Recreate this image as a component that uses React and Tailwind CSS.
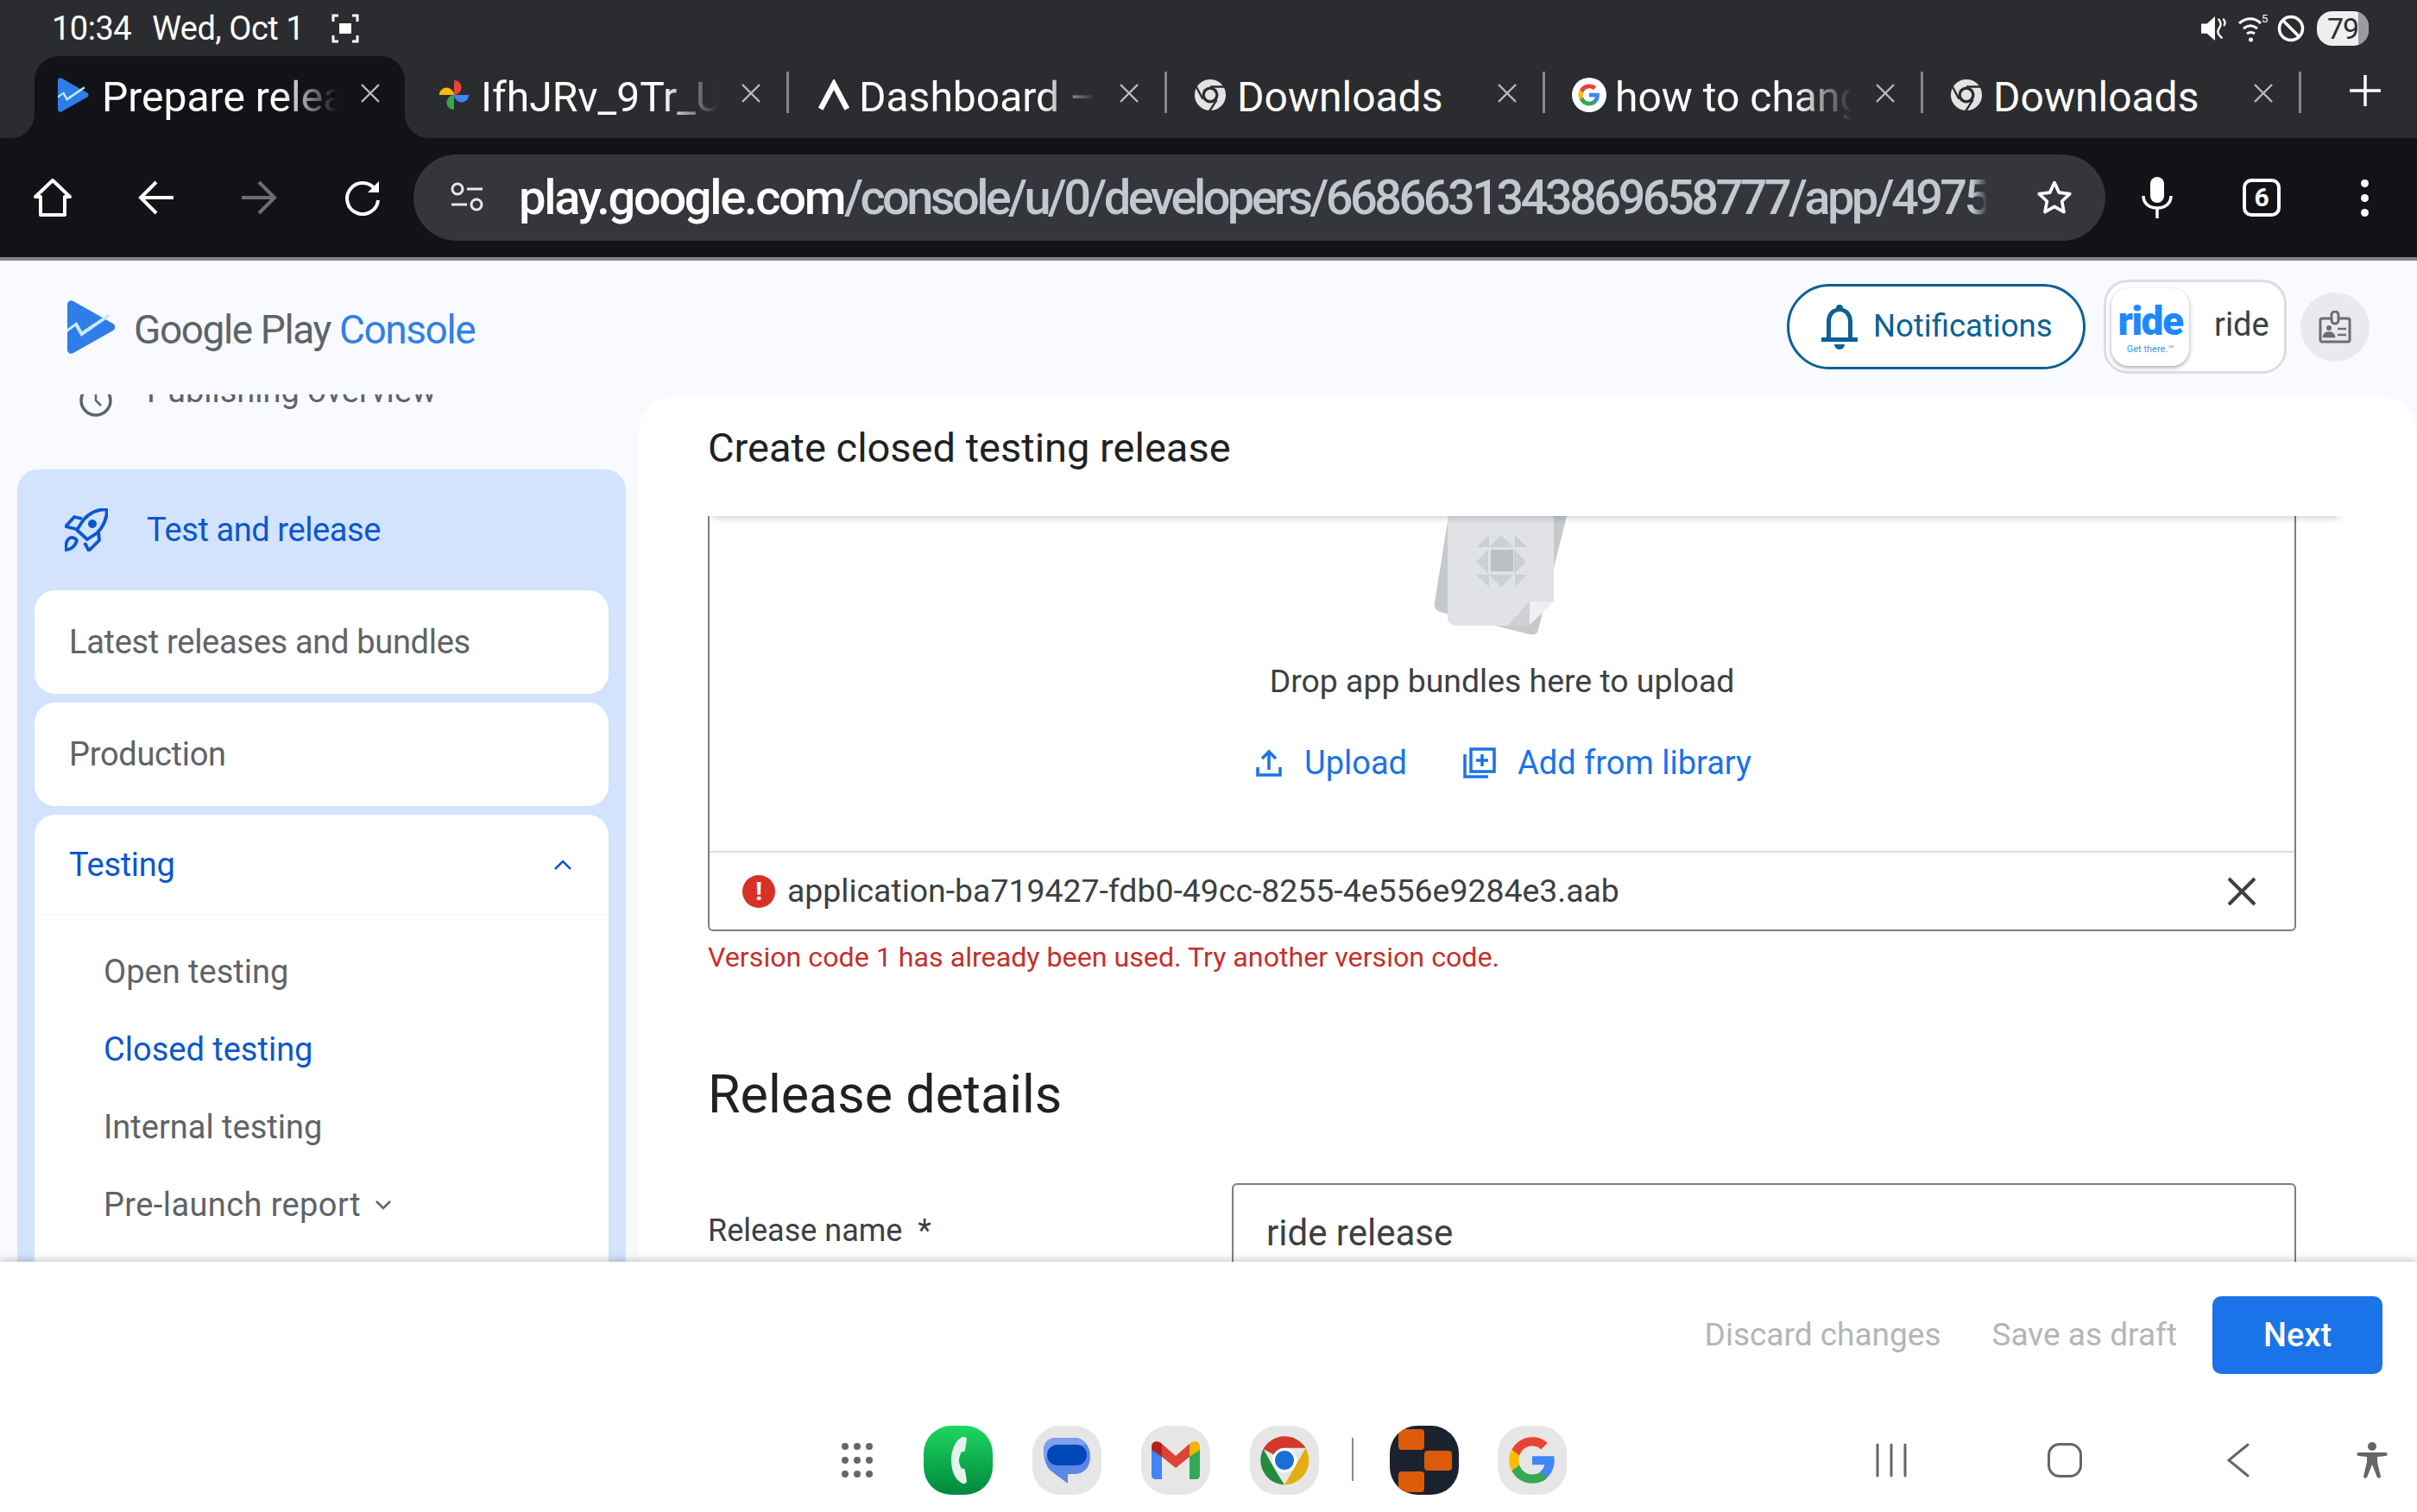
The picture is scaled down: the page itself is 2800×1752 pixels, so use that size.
import React from 'react';

const PlayLogo = ({ className }) => (
  <svg className={className} viewBox="0 0 56 62" fill="none">
    <path d="M0 5C0 1 4-1 7 1l46 26c3 2 3 6 0 8L7 61c-3 2-7 0-7-4z" fill="#2f7de9" />
    <path d="M0 33l11-8 6 11 30-20 2 3-33 23-7-12-9 7z" fill="#c4ecff" />
  </svg>
);

const ChromeMono = ({ className }) => (
  <svg className={className} viewBox="0 0 40 40">
    <circle cx="20" cy="20" r="19" fill="#e3e3e3" />
    <circle cx="20" cy="20" r="10" fill="#2b2c30" />
    <circle cx="20" cy="20" r="6.5" fill="#e3e3e3" />
    <path d="M20 10h18M11 25L3 10M28 26l-9 14" stroke="#2b2c30" strokeWidth="2.5" />
  </svg>
);

const GoogleG = ({ className }) => (
  <svg className={className} viewBox="0 0 48 48">
    <path fill="#4285F4" d="M46 24.500c0-1.600-.1-3.100-.4-4.500H24v8.600h12.300c-.5 2.800-2.100 5.200-4.500 6.800v5.600h7.300C43.400 37 46 31.300 46 24.500z" />
    <path fill="#34A853" d="M24 47c6.100 0 11.300-2 15.100-5.500l-7.300-5.600c-2 1.400-4.700 2.200-7.800 2.200-5.900 0-10.900-4-12.700-9.400H3.700v5.800C7.500 42 15.200 47 24 47z" />
    <path fill="#FBBC05" d="M11.300 28.700c-.5-1.400-.7-3-.7-4.700s.3-3.200.7-4.700v-5.800H3.700C2.100 16.500 1 20.100 1 24s1.100 7.500 2.700 10.500z" />
    <path fill="#EA4335" d="M24 9.900c3.400 0 6.400 1.200 8.700 3.400l6.500-6.500C35.300 3.200 30.100 1 24 1 15.200 1 7.500 6 3.700 13.500l7.600 5.800C13.100 13.900 18.100 9.900 24 9.900z" />
  </svg>
);

const Tab = ({ icon, label, fade }) => (
  <div className="flex h-[86px] w-[435px] shrink-0 items-center pl-[31px]">
    <div className="mt-[4px] flex w-[50px] shrink-0 items-center">{icon}</div>
    <div className={`mt-[10px] w-[280px] shrink-0 overflow-hidden whitespace-nowrap text-[48px] leading-[72px] text-white ${fade ? '[mask-image:linear-gradient(to_right,#000_75%,transparent_98%)]' : ''}`}>
      {label}
    </div>
    <svg className="ml-[21px] h-[24px] w-[24px] shrink-0" viewBox="0 0 24 24" stroke="#b9bbc0" strokeWidth="2.4" fill="none">
      <path d="M2 2l20 20M22 2L2 22" />
    </svg>
  </div>
);

const TabSep = () => <div className="mt-[18px] h-[48px] w-[3px] shrink-0 bg-[#85878c]" />;

const StatusBar = () => (
  <div className="flex h-[65px] items-center bg-[#2b2c30] pl-[60px] pr-[56px] text-white">
    <span className="text-[38px] leading-none tracking-[-0.5px]">10:34</span>
    <span className="ml-[24px] text-[38px] leading-none tracking-[-0.5px]">Wed, Oct 1</span>
    <svg className="ml-[31px] h-[34px] w-[34px]" viewBox="0 0 34 34" fill="none" stroke="#fff" strokeWidth="3">
      <path d="M9 2H3v7M25 2h6v7M9 32H3v-7M25 32h6v-7" />
      <rect x="10" y="11" width="14" height="12" fill="#fff" stroke="none" />
    </svg>
    <div className="ml-auto flex items-center">
      <svg className="h-[36px] w-[30px]" viewBox="0 0 32 36" fill="#fff">
        <path d="M0 12h7l10-9v30l-10-9H0z" />
        <path d="M21 6c4 4 4 8 1 12s-1 8 4 12M27 6c3 3 3 6 1 9" stroke="#fff" strokeWidth="2.500" fill="none" />
      </svg>
      <svg className="ml-[12px] h-[36px] w-[36px]" viewBox="0 0 36 36" fill="none" stroke="#fff" strokeWidth="3">
        <path d="M2 12c8-7 18-7 25 0M7 18c5-4 11-4 16 0M11 24c3-2 6-2 9 0" />
        <circle cx="15.500" cy="31" r="2.500" fill="#fff" stroke="none" />
        <text x="28" y="11" fontSize="13" fill="#fff" stroke="none">5</text>
      </svg>
      <svg className="ml-[10px] h-[36px] w-[32px]" viewBox="0 0 32 32" fill="none" stroke="#fff" strokeWidth="3.500">
        <circle cx="16" cy="16" r="13.500" />
        <path d="M7 7l18 18" />
      </svg>
      <div className="relative ml-[14px] flex h-[40px] w-[60px] items-center justify-center overflow-hidden rounded-[18px] bg-[#efefef] text-[34px] leading-none tracking-[-1px] text-[#2b2c30]">
        79
        <div className="absolute bottom-0 right-0 top-0 w-[12px] bg-[#9a9b9e]" />
      </div>
    </div>
  </div>
);

const TabStrip = () => (
  <div className="flex h-[95px] bg-[#2b2c30] pl-[40px]">
    <div className="relative mr-[7px] h-[95px] w-[429px] shrink-0 rounded-t-[28px] bg-[#121317]">
      <div className="absolute bottom-0 left-[-28px] h-[28px] w-[28px] bg-[radial-gradient(circle_at_0_0,#2b2c30_28px,#121317_28px)]" />
      <div className="absolute bottom-0 right-[-28px] h-[28px] w-[28px] bg-[radial-gradient(circle_at_100%_0,#2b2c30_28px,#121317_28px)]" />
      <div className="flex h-[86px] items-center pl-[27px]">
        <PlayLogo className="mr-[15px] mt-[4px] h-[40px] w-[36px] shrink-0" />
        <div className="mt-[10px] w-[278px] shrink-0 overflow-hidden whitespace-nowrap text-[48px] leading-[72px] text-white [mask-image:linear-gradient(to_right,#000_75%,transparent_98%)]">
          Prepare release
        </div>
        <svg className="ml-[21px] h-[24px] w-[24px] shrink-0" viewBox="0 0 24 24" stroke="#b9bbc0" strokeWidth="2.400" fill="none">
          <path d="M2 2l20 20M22 2L2 22" />
        </svg>
      </div>
    </div>
    <Tab
      fade
      label="IfhJRv_9Tr_Uc"
      icon={
        <svg className="h-[40px] w-[38px]" viewBox="0 0 40 40">
          <path d="M20 20V2c6 0 9 5 9 9s-4 9-9 9z" fill="#ea4335" />
          <path d="M20 20h18c0 6-5 9-9 9s-9-4-9-9z" fill="#4285f4" />
          <path d="M20 20v18c-6 0-9-5-9-9s4-9 9-9z" fill="#34a853" />
          <path d="M20 20H2c0-6 5-9 9-9s9 4 9 9z" fill="#fbbc05" />
        </svg>
      }
    />
    <TabSep />
    <Tab
      fade
      label="Dashboard – Ride"
      icon={
        <svg className="h-[36px] w-[42px]" viewBox="0 0 42 40" fill="none" stroke="#fff" strokeWidth="7">
          <path d="M4 38L21 6l17 32" />
        </svg>
      }
    />
    <TabSep />
    <Tab label="Downloads" icon={<ChromeMono className="h-[38px] w-[38px]" />} />
    <TabSep />
    <Tab fade label="how to change" icon={<div className="flex h-[40px] w-[40px] items-center justify-center rounded-full bg-white"><GoogleG className="h-[26px] w-[26px]" /></div>} />
    <TabSep />
    <Tab label="Downloads" icon={<ChromeMono className="h-[38px] w-[38px]" />} />
    <TabSep />
    <svg className="ml-[56px] mt-[22px] h-[36px] w-[36px] shrink-0" viewBox="0 0 36 36" stroke="#fff" strokeWidth="3.500">
      <path d="M18 0v36M0 18h36" />
    </svg>
  </div>
);

const Toolbar = () => (
  <div className="flex h-[138px] items-center bg-[#121317] pl-[38px]">
    <svg className="h-[46px] w-[46px] shrink-0" viewBox="0 0 46 46" fill="none" stroke="#fff" strokeWidth="4" strokeLinejoin="round">
      <path d="M23 3L3 22h6v21h28V22h6z" />
    </svg>
    <svg className="ml-[76px] h-[40px] w-[42px] shrink-0" viewBox="0 0 42 40" fill="none" stroke="#fff" strokeWidth="4">
      <path d="M21 2L3 20l18 18M3 20h38" />
    </svg>
    <svg className="ml-[77px] h-[40px] w-[42px] shrink-0" viewBox="0 0 42 40" fill="none" stroke="#6d6e72" strokeWidth="4">
      <path d="M21 2l18 18-18 18M39 20H1" />
    </svg>
    <svg className="ml-[78px] h-[42px] w-[42px] shrink-0" viewBox="0 0 42 42" fill="none" stroke="#fff" strokeWidth="4">
      <path d="M36 12A18 18 0 1 0 39 24" />
      <path d="M40 2v13H27z" fill="#fff" stroke="none" />
    </svg>
    <div className="ml-[38px] flex h-[100px] w-[1960px] shrink-0 items-center rounded-full bg-[#35363b] pl-[42px]">
      <svg className="h-[36px] w-[40px] shrink-0" viewBox="0 0 40 36" fill="none" stroke="#e6e7ea" strokeWidth="3">
        <circle cx="9" cy="8" r="6" />
        <path d="M20 8h18M2 26h18" />
        <circle cx="31" cy="26" r="6" />
      </svg>
      <div className="ml-[40px] w-[1701px] shrink-0 overflow-hidden whitespace-nowrap text-[56px] font-medium leading-[80px] tracking-[-3.600px] text-[#c4c7d0] [mask-image:linear-gradient(to_right,#000_99%,transparent)]">
        <span className="tracking-[-2.300px] text-white">play.google.com</span>/console/u/0/developers/6686631343869658777/app/49752
      </div>
      <svg className="ml-[56px] h-[44px] w-[44px] shrink-0" viewBox="0 0 24 24" fill="none" stroke="#fff" strokeWidth="2" strokeLinejoin="round">
        <path d="M12 2.500l2.900 6.300 6.800.8-5 4.700 1.300 6.800-6-3.400-6 3.400 1.300-6.800-5-4.700 6.800-.8z" />
      </svg>
    </div>
    <svg className="ml-[42px] h-[48px] w-[36px] shrink-0" viewBox="0 0 36 48" fill="none">
      <rect x="10" y="0" width="16" height="30" rx="8" fill="#fff" />
      <path d="M2 22c0 9 7 14 16 14s16-5 16-14M18 36v12" stroke="#fff" strokeWidth="3.500" />
    </svg>
    <div className="ml-[81px] flex h-[44px] w-[44px] shrink-0 items-center justify-center rounded-[10px] border-[4px] border-white text-[30px] font-bold leading-none text-white">6</div>
    <div className="ml-[93px] flex shrink-0 flex-col gap-[8px]">
      <div className="h-[9px] w-[9px] rounded-full bg-white" />
      <div className="h-[9px] w-[9px] rounded-full bg-white" />
      <div className="h-[9px] w-[9px] rounded-full bg-white" />
    </div>
  </div>
);

const ConsoleHeader = () => (
  <div className="flex h-[155px] shrink-0 items-center pb-[2px] pl-[78px]">
    <PlayLogo className="h-[62px] w-[56px] shrink-0" />
    <div className="ml-[21px] mt-[6px] whitespace-nowrap text-[46px] leading-none tracking-[-1.4px] text-[#5f6368]">
      Google Play <span className="text-[#3180e6]">Console</span>
    </div>
    <div className="ml-auto flex items-center">
      <div className="flex h-[99px] w-[346px] items-center rounded-full border-[3px] border-[#0b6096] bg-white pl-[37px] text-[36.500px] text-[#0b6096]">
        <svg className="h-[52px] w-[42px] shrink-0" viewBox="0 0 42 52" fill="#0b6096">
          <path d="M21 0a4 4 0 0 1 4 4c8 2 11 9 11 16v18h6v5H0v-5h6V20c0-7 3-14 11-16a4 4 0 0 1 4-4zM11 38h20V20c0-7-4-12-10-12s-10 5-10 12zM15 46h12a6 6 0 0 1-12 0z" />
        </svg>
        <span className="ml-[18px] whitespace-nowrap">Notifications</span>
      </div>
      <div className="ml-[21px] flex h-[109px] w-[212px] items-center rounded-[28px] border-[3px] border-[#dcdde0] bg-white pl-[6px]">
        <div className="flex h-[90px] w-[90px] shrink-0 flex-col items-center justify-center rounded-[20px] bg-white shadow-[0_2px_5px_rgba(0,0,0,0.35)]">
          <div className="text-[46px] font-black leading-[50px] tracking-[-1.500px] text-[#1e88ff]">ride</div>
          <div className="mt-[2px] text-[11px] leading-[12px] text-[#3a96f5]">Get there.™</div>
        </div>
        <span className="mb-[6px] ml-[29px] text-[38px] leading-none text-[#3c4043]">ride</span>
      </div>
      <div className="ml-[16px] mr-[55px] flex h-[80px] w-[80px] items-center justify-center rounded-full bg-[#e8eaed]">
        <svg className="h-[38px] w-[38px]" viewBox="0 0 38 38" fill="none" stroke="#6b6d70" strokeWidth="3">
          <rect x="2" y="9" width="34" height="27" rx="2" />
          <rect x="15" y="1" width="8" height="14" rx="4" fill="#e8eaed" />
          <circle cx="12" cy="20" r="3" fill="#6b6d70" stroke="none" />
          <path d="M6 30c1-6 11-6 12 0zM22 21h10M22 28h10" fill="#6b6d70" strokeWidth="2.500" />
        </svg>
      </div>
    </div>
  </div>
);

const NavCard = ({ children }) => (
  <div className="flex h-[120px] items-center rounded-[24px] bg-white pl-[40px] text-[38px] tracking-[-0.3px] text-[#5f6368]">{children}</div>
);

const SubItem = ({ children, active }) => (
  <div className={`flex h-[90px] items-center pl-[80px] text-[38px] ${active ? 'text-[#0b57d0]' : 'text-[#5f6368]'}`}>{children}</div>
);

const Sidebar = () => (
  <div className="w-[740px] shrink-0 overflow-hidden pl-[20px]">
    <div className="mt-[-49px] flex h-[90px] items-center pl-[72px] text-[#5f6368]">
      <svg className="mt-[22px] h-[38px] w-[38px] shrink-0" viewBox="0 0 38 38" fill="none" stroke="#5f6368" strokeWidth="3.500">
        <circle cx="19" cy="19" r="17" />
        <path d="M19 9v10l6 6" strokeWidth="2.500" />
      </svg>
      <span className="ml-[40px] whitespace-nowrap text-[38px]">Publishing overview</span>
    </div>
    <div className="mt-[46px] w-[705px] rounded-[24px] bg-[#d3e3fd] px-[20px] pb-[20px]">
      <div className="flex h-[140px] items-center pl-[35px] text-[38px] tracking-[-0.4px] text-[#0b57d0]">
        <svg className="h-[50px] w-[50px] shrink-0" viewBox="15 19 50 50" fill="none" stroke="#0b57d0" strokeWidth="3.800" strokeLinejoin="round">
          <path d="M64 20C52 20 43 25 37 32L29 44l12 11 11-7C60 40 64 31 64 20z" />
          <circle cx="47" cy="37" r="5" fill="#0b57d0" stroke="none" />
          <path d="M35 31l-9-2-10 11 12 3M54 46l1 10-12 12-5-9" />
          <path d="M16 67c0-6 1-11 4-13s7-1 9 2c-1 4-3 7-6 9s-5 2-7 2z" />
        </svg>
        <span className="ml-[45px] whitespace-nowrap">Test and release</span>
      </div>
      <div className="flex flex-col gap-[10px]">
        <NavCard>Latest releases and bundles</NavCard>
        <NavCard>Production</NavCard>
        <div className="h-[700px] rounded-[24px] bg-white">
          <div className="flex h-[116px] items-center justify-between border-b border-[#f1f3f4] pl-[40px] pr-[42px] text-[38px] tracking-[-0.3px] text-[#0b57d0]">
            <span className="mt-[2px]">Testing</span>
            <svg className="h-[14px] w-[22px]" viewBox="0 0 22 14" fill="none" stroke="#0b57d0" strokeWidth="2.500">
              <path d="M2 12l9-9 9 9" />
            </svg>
          </div>
          <div className="pt-[21px]">
            <SubItem>Open testing</SubItem>
            <SubItem active>Closed testing</SubItem>
            <SubItem>Internal testing</SubItem>
            <SubItem>
              <span className="tracking-[0.4px]">Pre-launch report</span>
              <svg className="ml-[16px] h-[12px] w-[20px]" viewBox="0 0 20 12" fill="none" stroke="#5f6368" strokeWidth="2.500">
                <path d="M2 2l8 8 8-8" />
              </svg>
            </SubItem>
          </div>
        </div>
      </div>
    </div>
  </div>
);

const BundleArt = () => (
  <svg className="h-[139px] w-[180px] shrink-0" viewBox="0 0 180 139">
    <path d="M28 0L12 100c-1 5 1 9 6 11L122 137c6 1 9-1 10-5L165 0z" fill="#c6c9cc" />
    <path d="M27 0H150V99L117 127H37c-6 0-10-4-10-10z" fill="#e0e2e5" />
    <path d="M122 99V127H96z" fill="#cfd1d4" />
    <path d="M122 99H150L122 126z" fill="#eeeff1" />
    <rect x="77" y="39" width="26" height="25" fill="#bdc0c3" />
    <path d="M89 22l14 14H75zM89 82L75 68h28zM60 53l14-14v28zM118 53l-14-14v28zM75 22v14H60zM105 22v14h14zM60 68h15v14zM119 68h-14v14z" fill="#cdd0d3" />
  </svg>
);

const MainCard = () => (
  <div className="mt-[3px] flex min-w-0 flex-1 flex-col overflow-hidden rounded-t-[40px] bg-white">
    <div className="relative z-10 ml-[80px] mr-[85px] flex h-[138px] shrink-0 items-center bg-white pb-[19px] text-[47px] text-[#202124] shadow-[0_8px_8px_-6px_rgba(0,0,0,0.2)]">
      Create closed testing release
    </div>
    <div className="ml-[80px] mr-[140px]">
      <div className="flex h-[481px] flex-col rounded-b-[6px] border-x-[2px] border-b-[2px] border-[#7c7f83]">
        <div className="flex h-[388px] flex-col items-center">
          <BundleArt />
          <div className="mt-[27px] text-[37.400px] leading-[50px] text-[#3c4043]">Drop app bundles here to upload</div>
          <div className="ml-[4px] mt-[45px] flex items-center text-[38px] leading-[50px] text-[#1a73e8]">
            <svg className="h-[32px] w-[30px]" viewBox="0 0 30 32" fill="none" stroke="#1a73e8" strokeWidth="3.500">
              <path d="M15 24V3M7 11l8-8 8 8M2 21v9h26v-9" />
            </svg>
            <span className="ml-[26px]">Upload</span>
            <svg className="ml-[65px] h-[36px] w-[38px]" viewBox="0 0 38 36" fill="none" stroke="#1a73e8" strokeWidth="3.500">
              <rect x="9" y="2" width="27" height="26" />
              <path d="M2 8v26h27M22 8v14M15 15h14" />
            </svg>
            <span className="ml-[25px] whitespace-nowrap">Add from library</span>
          </div>
        </div>
        <div className="flex flex-1 items-center border-t-[2px] border-[#dadce0] pl-[38px] pr-[44px]">
          <div className="flex h-[38px] w-[38px] shrink-0 items-center justify-center rounded-full bg-[#d93025] text-[30px] font-bold leading-none text-white">!</div>
          <span className="ml-[14px] whitespace-nowrap text-[37.400px] text-[#3c4043]">application-ba719427-fdb0-49cc-8255-4e556e9284e3.aab</span>
          <svg className="ml-auto h-[34px] w-[34px] shrink-0" viewBox="0 0 34 34" fill="none" stroke="#3c4043" strokeWidth="4">
            <path d="M2 2l30 30M32 2L2 32" />
          </svg>
        </div>
      </div>
      <div className="mt-[12px] text-[32.200px] leading-[36px] text-[#c5302a]">Version code 1 has already been used. Try another version code.</div>
      <div className="mt-[106px] text-[61px] leading-[70px] text-[#202124]">Release details</div>
      <div className="mt-[68px] flex">
        <div className="mt-[33px] w-[607px] shrink-0 whitespace-pre text-[36px] leading-[44px] text-[#3c4043]">Release name  *</div>
        <div className="h-[120px] flex-1 rounded-[6px] border-[2px] border-[#7c7f83] pl-[38px] pt-[28px] text-[42px] leading-[56px] text-[#3c4043]">ride release</div>
      </div>
    </div>
  </div>
);

const DockIcon = ({ bg, children }) => (
  <div className={`flex h-[80px] w-[80px] shrink-0 items-center justify-center overflow-hidden rounded-[32px] ${bg}`}>{children}</div>
);

const BottomBar = () => (
  <div className="relative z-20 flex h-[290px] shrink-0 flex-col bg-white shadow-[0_-3px_8px_rgba(0,0,0,0.18)]">
    <div className="flex h-[170px] items-start justify-end pr-[40px] pt-[40px]">
      <div className="flex h-[90px] items-center text-[37px] text-[#b4b5b7]">
        <span className="whitespace-nowrap">Discard changes</span>
        <span className="ml-[59px] whitespace-nowrap">Save as draft</span>
      </div>
      <div className="ml-[41px] flex h-[90px] w-[197px] items-center justify-center rounded-[10px] bg-[#1a73e8] text-[38px] font-medium text-white">Next</div>
    </div>
    <div className="flex flex-1 items-start pl-[975px] pt-[20px]">
      <div className="mt-[20px] grid h-[40px] w-[42px] shrink-0 grid-cols-3 content-between justify-between">
        {[0, 1, 2, 3, 4, 5, 6, 7, 8].map((i) => (
          <div key={i} className="h-[8px] w-[8px] rounded-full bg-[#666]" />
        ))}
      </div>
      <div className="ml-[53px]">
        <DockIcon bg="bg-gradient-to-b from-[#1ed760] to-[#00883f]">
          <svg className="h-[60px] w-[30px]" viewBox="0 0 30 60" fill="none">
            <path d="M20 3c-8 4-13 14-13 27s5 23 13 27c3 1 5-1 5-3l-2-12c0-2-2-3-4-2-2-4-3-7-3-10s1-6 3-10c2 1 4 0 4-2l2-12c0-2-2-4-5-3z" fill="#e5f3ea" />
          </svg>
        </DockIcon>
      </div>
      <div className="ml-[46px]">
        <DockIcon bg="bg-[#e6e6e6]">
          <svg className="h-[53px] w-[54px]" viewBox="0 0 54 53">
            <path d="M14 0H36c10 0 18 9 18 22s-8 20-18 20H28V53L8 38C3 33 0 25 0 14 0 6 6 0 14 0z" fill="#5c86e8" />
            <path d="M14 0H36c6 0 10 3 13 8H16C9 8 4 14 4 20v6C1 22 0 18 0 14 0 6 6 0 14 0z" fill="#7e9fed" />
            <rect x="4" y="8" width="46" height="24" rx="12" fill="#0047b8" />
          </svg>
        </DockIcon>
      </div>
      <div className="ml-[46px]">
        <DockIcon bg="bg-[#e6e6e6]">
          <svg className="h-[44px] w-[56px]" viewBox="0 0 56 44">
            <path d="M0 10v30c0 2 2 4 4 4h8V16z" fill="#4285f4" />
            <path d="M44 16v28h8c2 0 4-2 4-4V10z" fill="#34a853" />
            <path d="M12 3L28 17 44 3V18L28 31 12 18z" fill="#db4437" />
            <path d="M0 6c0-6 7-8 12-3v15L0 10z" fill="#b0211c" />
            <path d="M44 3c5-5 12-3 12 3v4L44 18z" fill="#f4b400" />
          </svg>
        </DockIcon>
      </div>
      <div className="ml-[46px]">
        <DockIcon bg="bg-[#e6e6e6]">
          <svg className="h-[62px] w-[62px]" viewBox="0 0 48 48">
            <path d="M24 24L5 14A22 22 0 0 1 43 13H24z" fill="#d0392b" />
            <path d="M24 46A22 22 0 0 1 5 14l12 21z" fill="#248a3d" />
            <path d="M24 46L35 27l8-14A22 22 0 0 1 24 46z" fill="#e6ad13" />
            <circle cx="24" cy="24" r="11" fill="#fff" />
            <circle cx="24" cy="24" r="8.500" fill="#1a6ed8" />
          </svg>
        </DockIcon>
      </div>
      <div className="ml-[38px] mt-[14px] h-[50px] w-[2px] shrink-0 bg-[#8a8a8a]" />
      <div className="ml-[42px]">
        <DockIcon bg="bg-[#1a2230]">
          <svg className="h-[80px] w-[80px]" viewBox="0 0 80 80" fill="#dc5b08">
            <rect x="10" y="4" width="30" height="24" rx="4" />
            <rect x="40" y="29" width="32" height="23" rx="4" />
            <rect x="10" y="53" width="30" height="24" rx="4" />
          </svg>
        </DockIcon>
      </div>
      <div className="ml-[45px]">
        <DockIcon bg="bg-[#e6e6e6]">
          <GoogleG className="h-[56px] w-[56px]" />
        </DockIcon>
      </div>
      <svg className="ml-[358px] mt-[20px] h-[40px] w-[36px] shrink-0" viewBox="0 0 36 40" stroke="#666" strokeWidth="3" strokeLinecap="round">
        <path d="M2 2v36M18 2v36M34 2v36" />
      </svg>
      <div className="ml-[163px] mt-[20px] h-[40px] w-[40px] shrink-0 rounded-[14px] border-[3px] border-[#666]" />
      <svg className="ml-[168px] mt-[20px] h-[40px] w-[26px] shrink-0" viewBox="0 0 26 40" fill="none" stroke="#666" strokeWidth="3" strokeLinecap="round">
        <path d="M24 2L2 20l22 18" />
      </svg>
      <svg className="ml-[124px] mt-[19px] h-[42px] w-[36px] shrink-0" viewBox="0 0 36 42" fill="#666">
        <circle cx="18" cy="5" r="5" />
        <path d="M2 12h32c2 0 2 4 0 4l-10 1v6l4 17c0 2-3 2-4 1l-6-15-6 15c-1 1-4 1-4-1l4-17v-6L2 16c-2 0-2-4 0-4z" />
      </svg>
    </div>
  </div>
);

export default function App() {
  return (
    <div className="flex h-[1752px] w-[2800px] flex-col overflow-hidden bg-white font-['Roboto','Noto_Sans',sans-serif]">
      <StatusBar />
      <TabStrip />
      <Toolbar />
      <div className="h-[4px] shrink-0 bg-[#84858c]" />
      <div className="flex min-h-0 flex-1 flex-col bg-[#f8faff]">
        <ConsoleHeader />
        <div className="flex min-h-0 flex-1 overflow-hidden">
          <Sidebar />
          <MainCard />
        </div>
      </div>
      <BottomBar />
    </div>
  );
}
